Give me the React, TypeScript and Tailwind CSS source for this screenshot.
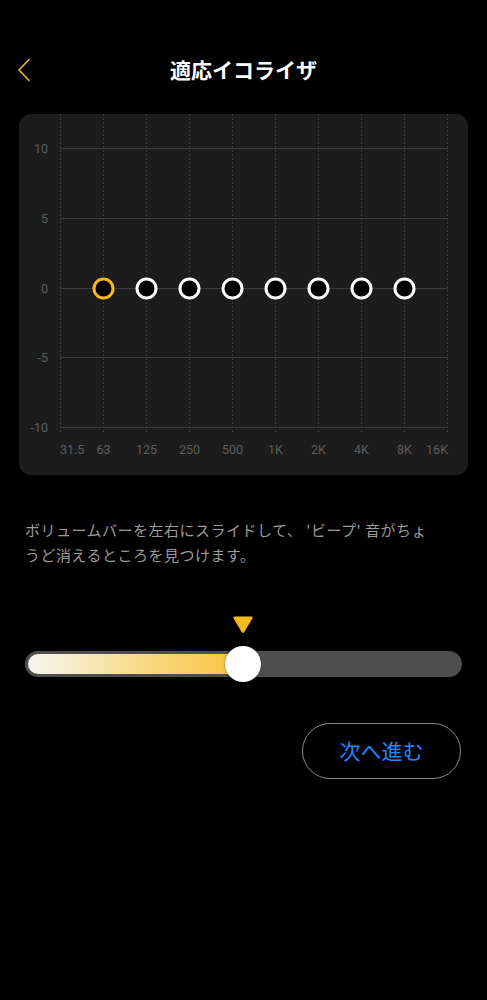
import React from 'react';

const BANDS = ['63', '125', '250', '500', '1K', '2K', '4K', '8K'];
const LEVELS = [10, 5, 0, -5, -10];

// chart coordinates are relative to the card (card left = 19, top = 114)
const X0 = 41;
const STEP = 43;
const Y_LINES = [34, 104, 174, 243, 313];

const EqChart: React.FC = () => {
  const verticals = Array.from({ length: 10 }, (_, i) => X0 + i * STEP + 0.5);
  return (
    <svg width={449} height={361} className="block">
      {verticals.map((x) => (
        <line key={x} x1={x} x2={x} y1={0} y2={319} stroke="#3b3b3b" strokeWidth={1} strokeDasharray="2 2" />
      ))}
      {Y_LINES.map((y) => (
        <line key={y} x1={X0} x2={X0 + 9 * STEP + 1} y1={y + 0.5} y2={y + 0.5} stroke="#3a3a3a" strokeWidth={1.2} />
      ))}
      {LEVELS.map((lv, i) => (
        <text
          key={lv}
          x={29}
          y={Y_LINES[i] + 4.5}
          textAnchor="end"
          fontSize={12.5}
          fill="#5c5c5c"
          fontFamily="Roboto, 'Noto Sans', sans-serif"
        >
          {lv}
        </text>
      ))}
      <g fontSize={12.5} fill="#5c5c5c" fontFamily="Roboto, 'Noto Sans', sans-serif">
        <text x={X0} y={340} textAnchor="start">31.5</text>
        {BANDS.map((b, i) => (
          <text key={b} x={X0 + (i + 1) * STEP + 0.5} y={340} textAnchor="middle">{b}</text>
        ))}
        <text x={X0 + 9 * STEP + 1} y={340} textAnchor="end">16K</text>
      </g>
      {BANDS.map((b, i) => (
        <circle
          key={b}
          cx={X0 + (i + 1) * STEP + 0.5}
          cy={174.5}
          r={9.5}
          fill="#000"
          stroke={i === 0 ? '#f7b81d' : '#ffffff'}
          strokeWidth={3}
        />
      ))}
    </svg>
  );
};

export default function App() {
  return (
    <div
      className="w-[487px] h-[1000px] bg-black text-white overflow-hidden"
      style={{ fontFamily: "'Noto Sans CJK JP', 'Noto Sans', sans-serif" }}
    >
      {/* header */}
      <div className="relative h-[40px] mt-[50px] flex items-center justify-center">
        <button className="absolute left-[14px] top-[8px] w-[20px] h-[24px] flex items-center justify-center">
          <svg width="14" height="24" viewBox="0 0 14 24" fill="none">
            <path d="M12 1.5 L2 12 L12 22.5" stroke="#f5b81c" strokeWidth="1.6" strokeLinecap="round" strokeLinejoin="round" />
          </svg>
        </button>
        <h1 className="text-[21px] font-bold">適応イコライザ</h1>
      </div>

      {/* eq card */}
      <div className="mt-[24px] ml-[19px] w-[449px] h-[361px] rounded-[12px] bg-[#1c1c1c] overflow-hidden">
        <EqChart />
      </div>

      <p className="mt-[42px] px-[25px] text-[15px] tracking-[0.5px] leading-[25px] text-[#9a9a9a]">
        ボリュームバーを左右にスライドして、 'ビープ' 音がちょ
        <br />
        うど消えるところを見つけます。
      </p>

      {/* slider */}
      <div className="mt-[48px] flex justify-center">
        <svg width="22" height="19" viewBox="0 0 22 19" className="ml-[-1px]">
          <path d="M3 1.5 H19 Q21.5 1.5 20.2 3.8 L12.3 17 Q11 19 9.7 17 L1.8 3.8 Q0.5 1.5 3 1.5 Z" fill="#f8b91c" />
        </svg>
      </div>
      <div className="relative mt-[12px] mx-[25px] h-[36px] flex items-center">
        <div className="w-full h-[26px] rounded-full bg-[#4e4e4e] p-[3px] flex">
          <div className="h-full w-[216px] rounded-full bg-gradient-to-r from-[#f7f5f0] via-[#f8dc8a] to-[#f9c233]" />
        </div>
        <div className="absolute left-[200px] top-0 w-[36px] h-[36px] rounded-full bg-white shadow-[0_0_2px_rgba(0,0,0,0.6)]" />
      </div>

      {/* next */}
      <div className="mt-[41px] flex justify-end pr-[26px]">
        <button className="w-[159px] h-[56px] rounded-full border border-[#8a8a8a] text-[#1e88ff] text-[21px] flex items-center justify-center">
          次へ進む
        </button>
      </div>
    </div>
  );
}
